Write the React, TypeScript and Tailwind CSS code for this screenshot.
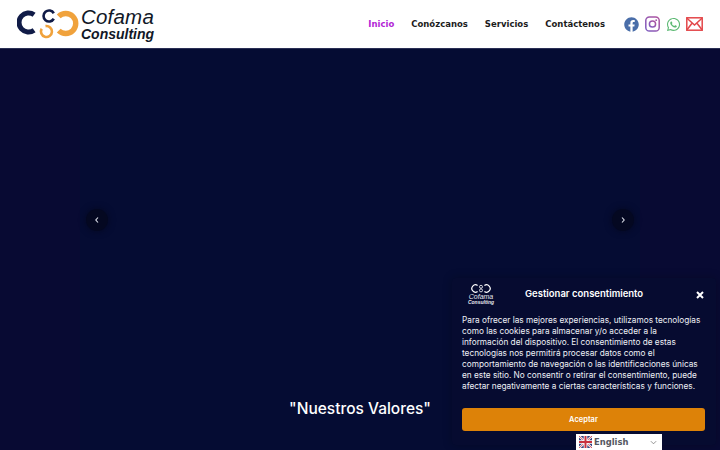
import { FaFacebook, FaWhatsapp } from "react-icons/fa";

const Logo = () => (
  <svg width="62" height="32" viewBox="0 0 62 32" className="shrink-0">
    <g fill="none">
      <path d="M17.1 6.8 A9.5 9.5 0 1 0 17.1 22.2" stroke="#101b47" strokeWidth="5" />
      <path d="M36.8 5.25 A5.5 5.5 0 1 0 36.8 10.75" stroke="#101b47" strokeWidth="2.6" />
      <path d="M28.5 18.1 A5.5 5.5 0 1 1 24.7 20.75" stroke="#f0a23c" strokeWidth="2.6" />
      <path d="M41.7 8.4 A10 10 0 1 1 41.7 22.6" stroke="#f0a23c" strokeWidth="5.4" />
    </g>
  </svg>
);

const SmallLogo = () => (
  <div className="flex w-[24px] flex-col items-center">
    <svg width="20" height="9" viewBox="0 0 20 9" fill="none" stroke="#fff" strokeWidth="1.2">
      <path d="M6.6 1.6 A3.6 3.6 0 1 0 6.6 7.4" />
      <circle cx="10" cy="2.8" r="1.5" strokeWidth="0.8" />
      <circle cx="10" cy="6.4" r="1.5" strokeWidth="0.8" />
      <path d="M13.4 1.6 A3.6 3.6 0 1 1 13.4 7.4" />
    </svg>
    <span className="mt-[1px] font-['Liberation_Sans',sans-serif] text-[7px] leading-[5px] text-[#e8e8ee] italic">Cofama</span>
    <span className="mt-[1px] font-['Liberation_Sans',sans-serif] text-[5px] leading-[4px] font-bold text-[#e8e8ee] italic">Consulting</span>
  </div>
);

const Instagram = () => (
  <svg width="15" height="16" viewBox="0 0 15 16" fill="none">
    <defs>
      <linearGradient id="ig" x1="0" y1="1" x2="1" y2="0">
        <stop offset="0" stopColor="#7c5cc0" />
        <stop offset="1" stopColor="#b0539f" />
      </linearGradient>
    </defs>
    <rect x="0.8" y="1" width="13.4" height="14" rx="3.6" stroke="url(#ig)" strokeWidth="1.5" />
    <circle cx="7.5" cy="8" r="3.1" stroke="url(#ig)" strokeWidth="1.5" />
    <circle cx="11.2" cy="4.2" r="0.9" fill="#a054a8" />
  </svg>
);

const Mail = () => (
  <svg width="17" height="14" viewBox="0 0 17 14" fill="none" stroke="#e3474a" strokeWidth="1.5" className="-ml-[1px]">
    <rect x="0.8" y="0.8" width="15.4" height="12.4" />
    <path d="M1 1.2 L8.5 8 L16 1.2 M1 12.8 L6.2 6 M16 12.8 L10.8 6" />
  </svg>
);

const Flag = () => (
  <svg width="13" height="12" viewBox="0 0 13 12" className="shrink-0">
    <rect width="13" height="12" fill="#33427e" />
    <path d="M0 0 L13 12 M13 0 L0 12" stroke="#fff" strokeWidth="2.2" />
    <path d="M0 0 L13 12 M13 0 L0 12" stroke="#c8313e" strokeWidth="0.8" />
    <path d="M6.5 0 V12 M0 6 H13" stroke="#fff" strokeWidth="3.6" />
    <path d="M6.5 0 V12 M0 6 H13" stroke="#c8313e" strokeWidth="2" />
  </svg>
);

const Arrow = ({ dir }: { dir: "l" | "r" }) => (
  <div className="flex h-[22px] w-[22px] items-center justify-center rounded-full bg-[#040821] shadow-[0_0_7px_#040821]">
    <svg width="4" height="6" viewBox="0 0 4 6" fill="none" stroke="#dfe2ec" strokeWidth="1.1">
      <path d={dir === "l" ? "M3 0.5 L0.8 3 L3 5.5" : "M1 0.5 L3.2 3 L1 5.5"} />
    </svg>
  </div>
);

export default function App() {
  return (
    <div className="relative flex h-[450px] w-[720px] flex-col overflow-hidden bg-[#080a33]">
      <header className="flex h-[48px] shrink-0 items-center justify-between bg-white px-[17px] font-['DejaVu_Sans',sans-serif]">
        <div className="flex items-center gap-0">
          <Logo />
          <div className="ml-[2px] flex flex-col font-['Liberation_Sans',sans-serif] text-[#111827] italic">
            <span className="text-[20.5px] leading-[20px] tracking-[0.2px]">Cofama</span>
            <span className="text-[14px] leading-[14px] font-bold">Consulting</span>
          </div>
        </div>
        <div className="flex items-center">
          <nav className="flex items-center gap-[17px] text-[8.5px] font-bold text-[#1c1c1c]">
            <span className="text-[#b31fd6]">Inicio</span>
            <span>Conózcanos</span>
            <span>Servicios</span>
            <span>Contáctenos</span>
          </nav>
          <div className="ml-[19px] flex items-center gap-[6px]">
            <FaFacebook className="h-[15px] w-[15px] text-[#4a6ea9]" />
            <Instagram />
            <FaWhatsapp className="h-[15px] w-[15px] text-[#5cb973]" />
            <Mail />
          </div>
        </div>
      </header>

      <main className="flex min-h-0 flex-1 border-t border-[#2a2f55]">
        <div className="w-[80px]" />
        <section className="flex flex-1 flex-col bg-[#050c33]">
          <div className="flex h-[340px] items-center justify-between px-[6px] pt-[1px]">
            <Arrow dir="l" />
            <Arrow dir="r" />
          </div>
          <h2 className="pt-[10px] text-center font-['Inter',sans-serif] text-[15.5px] leading-[20px] font-medium text-white">
            "Nuestros Valores"
          </h2>
        </section>
        <div className="w-[80px]" />
      </main>

      <div className="absolute top-[278px] left-[452px] flex h-[167px] w-[264px] flex-col rounded-[4px] bg-[#060b30] py-[6px] pr-[11px] pl-[10px] font-['Inter',sans-serif] shadow-[0_0_10px_rgba(0,0,0,0.25)]">
        <div className="flex h-[20px] items-center">
          <div className="ml-[7px] w-[24px]">
            <SmallLogo />
          </div>
          <div className="ml-[32px] text-[9.5px] font-semibold text-white">Gestionar consentimiento</div>
          <svg className="mt-[2px] mr-[1px] ml-auto" width="8" height="8" viewBox="0 0 8 8" stroke="#fff" strokeWidth="2">
            <path d="M1 1 L7 7 M7 1 L1 7" />
          </svg>
        </div>
        <p className="mt-[11px] text-[8.25px] leading-[11px] whitespace-nowrap text-[#eef0f6]">
          Para ofrecer las mejores experiencias, utilizamos tecnologías
          <br />
          como las cookies para almacenar y/o acceder a la
          <br />
          información del dispositivo. El consentimiento de estas
          <br />
          tecnologías nos permitirá procesar datos como el
          <br />
          comportamiento de navegación o las identificaciones únicas
          <br />
          en este sitio. No consentir o retirar el consentimiento, puede
          <br />
          afectar negativamente a ciertas características y funciones.
        </p>
        <button className="mt-[16px] flex h-[23px] w-full items-center justify-center rounded-[3px] bg-[#dd8208] text-[7.5px] font-semibold text-white">
          Aceptar
        </button>
      </div>

      <div className="absolute top-[434px] left-[576px] flex h-[16px] w-[86px] items-center bg-white pl-[3px] font-['DejaVu_Sans',sans-serif] text-[8.4px] font-bold text-[#55585f]">
        <Flag />
        <span className="ml-[2px]">English</span>
        <svg className="mr-[5px] ml-auto" width="7" height="5" viewBox="0 0 8 5" fill="none" stroke="#777" strokeWidth="0.9">
          <path d="M1 1 L4 4 L7 1" />
        </svg>
      </div>
    </div>
  );
}
